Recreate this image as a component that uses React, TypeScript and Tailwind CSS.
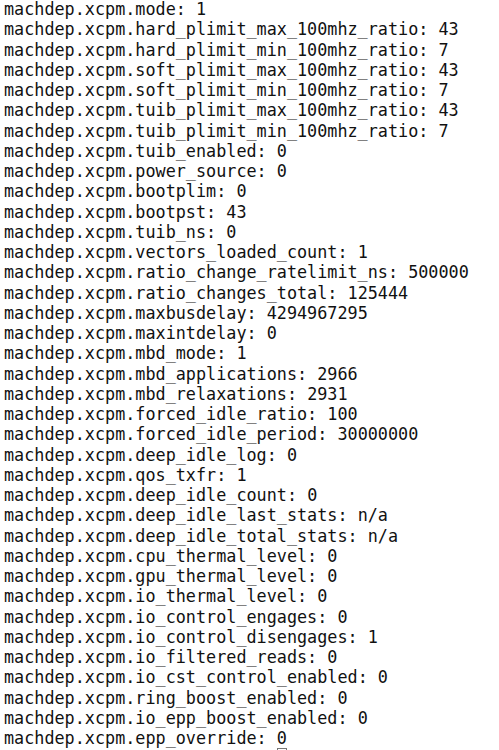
const LINES: [string, string][] = [
  ["mode", "1"],
  ["hard_plimit_max_100mhz_ratio", "43"],
  ["hard_plimit_min_100mhz_ratio", "7"],
  ["soft_plimit_max_100mhz_ratio", "43"],
  ["soft_plimit_min_100mhz_ratio", "7"],
  ["tuib_plimit_max_100mhz_ratio", "43"],
  ["tuib_plimit_min_100mhz_ratio", "7"],
  ["tuib_enabled", "0"],
  ["power_source", "0"],
  ["bootplim", "0"],
  ["bootpst", "43"],
  ["tuib_ns", "0"],
  ["vectors_loaded_count", "1"],
  ["ratio_change_ratelimit_ns", "500000"],
  ["ratio_changes_total", "125444"],
  ["maxbusdelay", "4294967295"],
  ["maxintdelay", "0"],
  ["mbd_mode", "1"],
  ["mbd_applications", "2966"],
  ["mbd_relaxations", "2931"],
  ["forced_idle_ratio", "100"],
  ["forced_idle_period", "30000000"],
  ["deep_idle_log", "0"],
  ["qos_txfr", "1"],
  ["deep_idle_count", "0"],
  ["deep_idle_last_stats", "n/a"],
  ["deep_idle_total_stats", "n/a"],
  ["cpu_thermal_level", "0"],
  ["gpu_thermal_level", "0"],
  ["io_thermal_level", "0"],
  ["io_control_engages", "0"],
  ["io_control_disengages", "1"],
  ["io_filtered_reads", "0"],
  ["io_cst_control_enabled", "0"],
  ["ring_boost_enabled", "0"],
  ["io_epp_boost_enabled", "0"],
  ["epp_override", "0"],
];

export default function App() {
  return (
    <div className="w-[499px] h-[750px] overflow-hidden bg-white">
      <pre className="-mt-[1px] pl-[4px] text-[16.8px] leading-[20.25px] text-[#111] font-['DejaVu_Sans_Mono',Menlo,monospace] whitespace-pre">
        {LINES.map(([key, value], i) => (
          <div key={`${i}-${key}`}>
            machdep.xcpm.{key}: {value}
          </div>
        ))}
        {/* inactive cursor on the prompt line, mostly cut off */}
        <div className="h-[20.25px]">
          <span className="inline-block ml-[27ch] w-[1ch] h-[18px] border border-[#777]" />
        </div>
      </pre>
    </div>
  );
}
